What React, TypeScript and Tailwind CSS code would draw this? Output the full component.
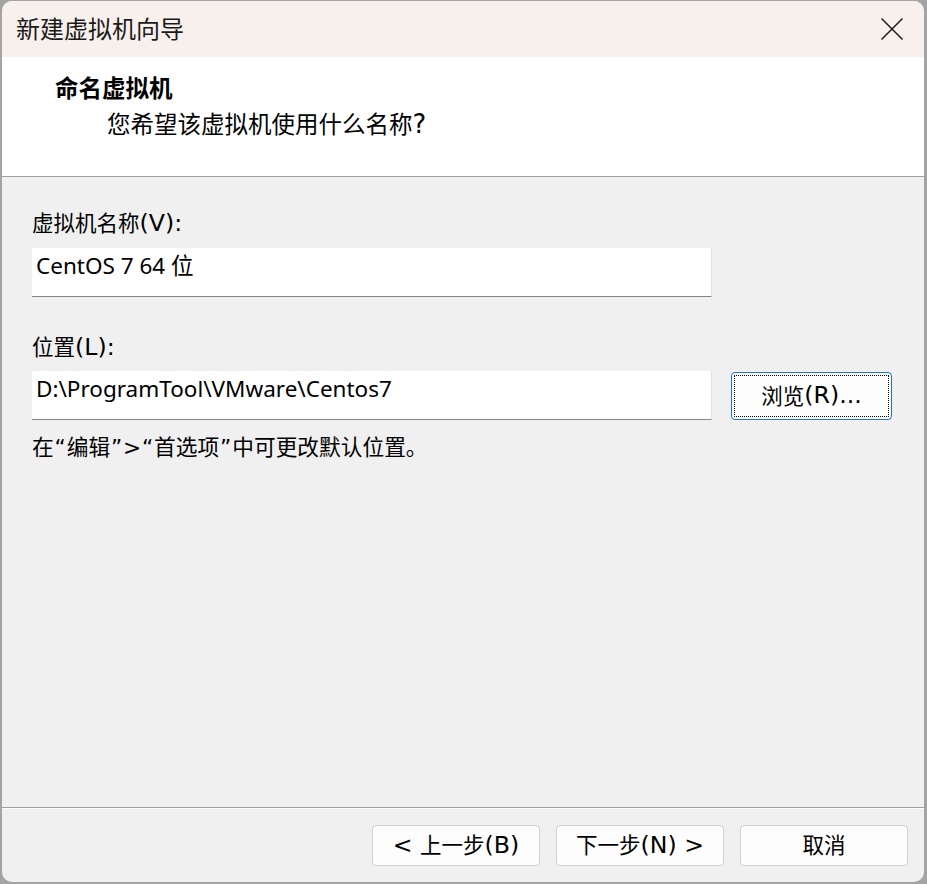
import React from "react";

const FONT = { fontFamily: '"Noto Sans", "Noto Sans CJK SC", sans-serif' };

// Latin bits in the dialog labels render wider than the CJK text around them
function Mixed({ text }: { text: string }) {
  const parts = text.split(/([\u3000-\u9fff\uff00-\uffef]+)/).filter(Boolean);
  return (
    <>
      {parts.map((p, i) =>
        /[\u3000-\u9fff\uff00-\uffef]/.test(p) ? (
          <span key={i}>{p}</span>
        ) : (
          <span key={i} className="font-['DejaVu_Sans',sans-serif] text-[1.1em] whitespace-pre">
            {p}
          </span>
        )
      )}
    </>
  );
}

// the hint line uses narrow fixed-width punctuation cells between the CJK chars
function Hint({ text }: { text: string }) {
  return (
    <>
      {Array.from(text).map((ch, i) =>
        /[\u3000-\u9fff\uff00-\uffef]/.test(ch) ? (
          <span key={i}>{ch}</span>
        ) : (
          <span
            key={i}
            className={
              ch === ">"
                ? "inline-block w-[18px] text-center font-['DejaVu_Sans',sans-serif]"
                : "inline-block w-[13px] text-center font-['DejaVu_Sans',sans-serif]"
            }
          >
            {ch}
          </span>
        )
      )}
    </>
  );
}

function CloseIcon() {
  return (
    <svg width="24" height="24" viewBox="0 0 24 24" fill="none">
      <path d="M1.5 1.5 L22.5 22.5 M22.5 1.5 L1.5 22.5" stroke="#1b1b1b" strokeWidth="1.5" />
    </svg>
  );
}

function TextBox({ value }: { value: string }) {
  return (
    <div className="h-[49px] w-[680px] border-r border-[#e3e3e3] border-b border-b-[#858585] bg-white pl-[4px] pt-[3px] text-[22.5px] leading-[30px] text-black">
      {value}
    </div>
  );
}

function WizardButton({ label, focused }: { label: string; focused?: boolean }) {
  return (
    <button
      className={
        focused
          ? "flex h-[48px] w-[161px] items-center justify-center rounded-[4px] border border-[#1a73c8] bg-[#fdfdfd] text-[21.5px] text-black outline-1 outline-dotted outline-black outline-offset-[-4px]"
          : "flex h-[41px] w-[168px] items-center justify-center rounded-[4px] border border-[#d0d0d0] bg-[#fdfdfd] text-[21.5px] text-black"
      }
    >
      <Mixed text={label} />
    </button>
  );
}

export default function App() {
  return (
    <div className="h-[884px] w-[927px] bg-[#a4a4a4] pb-[2px] pl-[2px] pr-[3px] pt-[1px]" style={FONT}>
      <div className="flex h-full flex-col overflow-hidden rounded-[10px] bg-[#f0f0f0]">
        {/* title bar */}
        <div className="flex h-[56px] items-center justify-between bg-[#f8f0ec] pl-[14px] pr-[20px]">
          <span className="text-[24px] text-[#1a1a1a]">新建虚拟机向导</span>
          <CloseIcon />
        </div>

        {/* header */}
        <div className="h-[120px] border-b border-[#a0a0a0] bg-white pl-[53px] pt-[16px]">
          <div className="text-[23.5px] font-bold leading-[30px] text-black">命名虚拟机</div>
          <div className="mt-[6px] pl-[52px] text-[23.5px] leading-[30px] text-black">
            <Mixed text="您希望该虚拟机使用什么名称?" />
          </div>
        </div>

        {/* body */}
        <div className="flex-1 pl-[30px] pt-[31px]">
          <div className="text-[21.5px] leading-[30px] text-black">
            <Mixed text="虚拟机名称(V):" />
          </div>
          <div className="mt-[10px]">
            <TextBox value="CentOS 7 64 位" />
          </div>

          <div className="mt-[35px] text-[21.5px] leading-[30px] text-black">
            <Mixed text="位置(L):" />
          </div>
          <div className="mt-[9px] flex items-start gap-[19px]">
            <TextBox value="D:\ProgramTool\VMware\Centos7" />
            <div className="pt-[1px]">
              <WizardButton label="浏览(R)..." focused />
            </div>
          </div>

          <div className="mt-[12px] text-[21.7px] leading-[30px] text-black">
            <Hint text="在“编辑”>“首选项”中可更改默认位置。" />
          </div>
        </div>

        {/* footer */}
        <div className="border-t border-[#a0a0a0]">
          <div className="flex justify-end gap-[16px] border-t border-white pb-[16px] pr-[16px] pt-[16px]">
            <WizardButton label="< 上一步(B)" />
            <WizardButton label="下一步(N) >" />
            <WizardButton label="取消" />
          </div>
        </div>
      </div>
    </div>
  );
}
